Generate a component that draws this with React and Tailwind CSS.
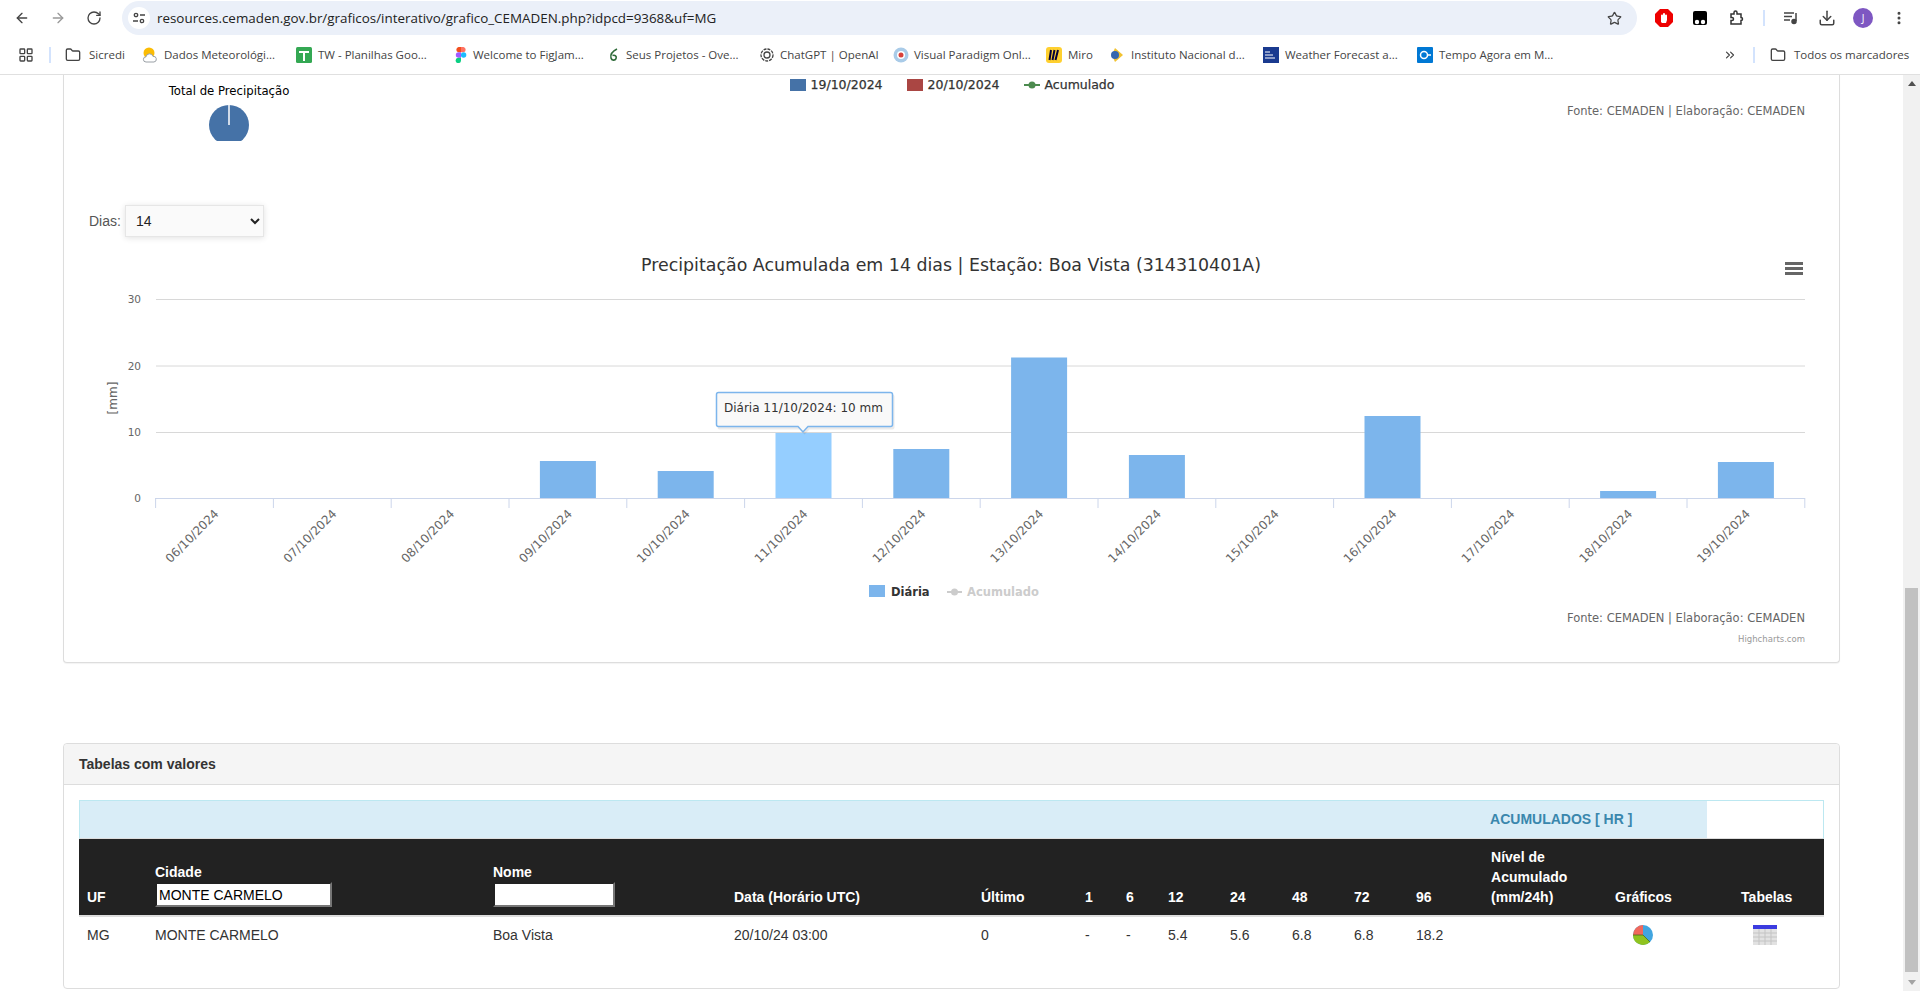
import { ArrowLeft, ArrowRight, RotateCw, Star, Download, MoreVertical, Folder, LayoutGrid, ChevronsRight } from 'lucide-react';

const chartFont = '"DejaVu Sans", sans-serif';

const bookmarks = [
  { w: 'w-[77px]', gap: 'gap-[8px]', label: 'Sicredi', icon: <Folder size={16} strokeWidth={2} className="text-[#444]" /> },
  { w: 'w-[154px]', gap: 'gap-[6px]', label: 'Dados Meteorológi...', icon: <SunIcon /> },
  { w: 'w-[157px]', gap: 'gap-[6px]', label: 'TW - Planilhas Goo...', icon: <SheetIcon /> },
  { w: 'w-[153px]', gap: 'gap-[4px]', label: 'Welcome to FigJam...', icon: <FigmaIcon /> },
  { w: 'w-[153px]', gap: 'gap-[4px]', label: 'Seus Projetos - Ove...', icon: <LeafIcon /> },
  { w: 'w-[134px]', gap: 'gap-[5px]', label: 'ChatGPT | OpenAI', icon: <GptIcon /> },
  { w: 'w-[153px]', gap: 'gap-[5px]', label: 'Visual Paradigm Onl...', icon: <VpIcon /> },
  { w: 'w-[63px]', gap: 'gap-[6px]', label: 'Miro', icon: <MiroIcon /> },
  { w: 'w-[154px]', gap: 'gap-[6px]', label: 'Instituto Nacional d...', icon: <InpeIcon /> },
  { w: 'w-[154px]', gap: 'gap-[6px]', label: 'Weather Forecast a...', icon: <TwcIcon /> },
  { w: 'w-[140px]', gap: 'gap-[6px]', label: 'Tempo Agora em M...', icon: <TempoIcon /> },
];

function SunIcon() {
  return (
    <svg width="16" height="16" viewBox="0 0 16 16">
      <circle cx="7" cy="6" r="5.5" fill="#fbbc04" />
      <path d="M4 15a2.6 2.6 0 0 1 0-5.2 3.6 3.6 0 0 1 7-.4 2.8 2.8 0 0 1 1 5.6z" fill="#fff" stroke="#9aa0a6" strokeWidth="1" />
    </svg>
  );
}
function SheetIcon() {
  return (
    <svg width="16" height="16" viewBox="0 0 16 16">
      <rect width="16" height="16" rx="1.5" fill="#34a853" />
      <path d="M3 5h10M8 5v9" stroke="#fff" strokeWidth="2" />
    </svg>
  );
}
function FigmaIcon() {
  return (
    <svg width="16" height="16" viewBox="0 0 16 16">
      <path d="M8 0H5.5a2.7 2.7 0 0 0 0 5.3H8z" fill="#f24e1e" />
      <path d="M8 0h2.5a2.7 2.7 0 0 1 0 5.3H8z" fill="#ff7262" />
      <path d="M8 5.3H5.5a2.7 2.7 0 0 0 0 5.4H8z" fill="#a259ff" />
      <circle cx="10.6" cy="8" r="2.7" fill="#1abcfe" />
      <path d="M8 10.7H5.5A2.7 2.7 0 1 0 8 13.4z" fill="#0acf83" />
    </svg>
  );
}
function LeafIcon() {
  return (
    <svg width="16" height="16" viewBox="0 0 16 16" fill="none" stroke="#2f6b3a" strokeWidth="1.6">
      <path d="M11 2C7 4 4 7 5 11c.6 2.500 4 3 5 .6 1-2.200-1-4-3.500-3" />
    </svg>
  );
}
function GptIcon() {
  return (
    <svg width="16" height="16" viewBox="0 0 16 16" fill="none" stroke="#444" strokeWidth="1.300">
      <circle cx="8" cy="8" r="6" strokeDasharray="3 1" />
      <circle cx="8" cy="8" r="3" />
    </svg>
  );
}
function VpIcon() {
  return (
    <svg width="16" height="16" viewBox="0 0 16 16">
      <circle cx="8" cy="8" r="7.500" fill="#a9cbe8" />
      <circle cx="8" cy="8" r="4" fill="#fff" />
      <circle cx="8" cy="8" r="2.500" fill="#d9403a" />
    </svg>
  );
}
function MiroIcon() {
  return (
    <svg width="16" height="16" viewBox="0 0 16 16">
      <rect width="16" height="16" rx="3" fill="#ffd02f" />
      <path d="M5 3l-1.500 10M8.500 3L6.500 13M12 3L9.500 13" stroke="#050038" strokeWidth="2" />
    </svg>
  );
}
function InpeIcon() {
  return (
    <svg width="16" height="16" viewBox="0 0 16 16">
      <path d="M6 1l8 7-8 7-3-7z" fill="#f2c230" />
      <circle cx="6" cy="8" r="4" fill="#3566b0" />
    </svg>
  );
}
function TwcIcon() {
  return (
    <svg width="16" height="16" viewBox="0 0 16 16">
      <rect width="16" height="16" fill="#1a3a8f" />
      <path d="M2 5h5M2 8h8M2 11h10" stroke="#fff" strokeWidth="1" />
    </svg>
  );
}
function TempoIcon() {
  return (
    <svg width="16" height="16" viewBox="0 0 16 16">
      <rect width="16" height="16" rx="1" fill="#0078d4" />
      <circle cx="7" cy="8" r="3.500" fill="none" stroke="#fff" strokeWidth="1.500" />
      <path d="M10 8h4" stroke="#fff" strokeWidth="1.500" />
    </svg>
  );
}

function Toolbar() {
  return (
    <div className="h-[36px] shrink-0 flex items-center bg-white text-[#444]">
      <div className="w-[122px] flex items-center pl-[14px] gap-[20px] shrink-0">
        <ArrowLeft size={16} strokeWidth={2} />
        <ArrowRight size={16} strokeWidth={2} className="text-[#999]" />
        <RotateCw size={16} strokeWidth={2} />
      </div>
      <div className="w-[1515px] h-[34px] rounded-full bg-[#ebf0f9] flex items-center pl-[6px] pr-[15px] shrink-0">
        <div className="w-[22px] h-[22px] rounded-full bg-white flex items-center justify-center shrink-0">
          <svg width="14" height="14" viewBox="0 0 14 14" fill="none" stroke="#444" strokeWidth="1.300">
            <circle cx="4" cy="4" r="1.700" />
            <path d="M8 4h5M1 10h5" />
            <circle cx="10" cy="10" r="1.700" />
          </svg>
        </div>
        <span className="ml-[7px] text-[13.4px] text-[#222] font-['Open_Sans',sans-serif]">resources.cemaden.gov.br/graficos/interativo/grafico_CEMADEN.php?idpcd=9368&uf=MG</span>
        <Star size={15} strokeWidth={2} className="ml-auto" />
      </div>
      <div className="flex-1 flex items-center pl-[17px]">
        <svg width="20" height="20" viewBox="0 0 20 20">
          <path d="M6 1h8l5 5v8l-5 5H6l-5-5V6z" fill="#e00" />
          <path d="M7 14V7.500a1 1 0 0 1 2 0V6a1 1 0 0 1 2 0v1.500a1 1 0 0 1 2 0V12l-1 3H8z" fill="#fff" />
        </svg>
        <svg width="16" height="16" viewBox="0 0 16 16" className="ml-[18px]">
          <path d="M3 1h10a2 2 0 0 1 2 2v10a2 2 0 0 1-2 2H3a2 2 0 0 1-2-2V3a2 2 0 0 1 2-2z" fill="#000" />
          <circle cx="5" cy="12" r="2.200" fill="#fff" />
          <circle cx="11" cy="12" r="2.200" fill="#fff" />
        </svg>
        <svg width="16" height="16" viewBox="0 0 16 16" fill="none" stroke="#333" strokeWidth="1.500" className="ml-[21px]">
          <path d="M2 4h3V2.500a1.500 1.500 0 0 1 3 0V4h4v3.500a1.500 1.500 0 0 1 0 3V14H2v-3.500h1a1.500 1.500 0 0 0 0-3H2z" />
        </svg>
        <div className="ml-[18px] w-[2px] h-[16px] bg-[#d3e3fd]" />
        <svg width="16" height="14" viewBox="0 0 16 14" fill="none" stroke="#444" strokeWidth="1.500" className="ml-[18px]">
          <path d="M1 2h10M1 5.500h8M1 9h6M13 2v8" />
          <circle cx="11" cy="10.500" r="2" fill="#444" />
        </svg>
        <Download size={18} strokeWidth={2} className="ml-[19px]" />
        <div className="ml-[17px] w-[20px] h-[20px] rounded-full bg-[#7e57c2] text-white text-[10px] flex items-center justify-center font-['Open_Sans',sans-serif]">J</div>
        <MoreVertical size={16} strokeWidth={2.500} className="ml-[18px]" />
      </div>
    </div>
  );
}

function Bookmarks() {
  return (
    <div className="h-[39px] shrink-0 flex items-center bg-white border-b border-[#e0e0e0] text-[11.5px] text-[#444] font-['Open_Sans',sans-serif]">
      <div className="w-[49px] flex justify-end pr-[15px]">
        <LayoutGrid size={16} strokeWidth={2} />
      </div>
      <div className="w-[2px] h-[16px] bg-[#d3e3fd]" />
      <div className="flex items-center pl-[14px]">
        {bookmarks.map((b) => (
          <div key={b.label} className={`${b.w} ${b.gap} flex items-center shrink-0 whitespace-nowrap`}>
            <span className="shrink-0 flex">{b.icon}</span>
            <span>{b.label}</span>
          </div>
        ))}
      </div>
      <ChevronsRight size={14} className="ml-[166px]" />
      <div className="ml-[16px] w-[2px] h-[16px] bg-[#d3e3fd]" />
      <Folder size={16} strokeWidth={2} className="ml-[15px]" />
      <span className="ml-[8px]">Todos os marcadores</span>
    </div>
  );
}

function Scrollbar() {
  return (
    <div className="w-[17px] shrink-0 bg-[#f1f1f1] flex flex-col items-center">
      <div className="h-[17px] flex items-center justify-center">
        <div className="w-0 h-0 border-x-[4px] border-x-transparent border-b-[5px] border-b-[#505050]" />
      </div>
      <div className="mt-[496px] w-[13px] h-[384px] bg-[#c1c1c1]" />
      <div className="mt-auto h-[17px] flex items-center justify-center">
        <div className="w-0 h-0 border-x-[4px] border-x-transparent border-t-[5px] border-t-[#a3a3a3]" />
      </div>
    </div>
  );
}

const step = 117.8;
const ticks = Array.from({ length: 15 }, (_, i) => 155.6 + step * i);
const days = ['06', '07', '08', '09', '10', '11', '12', '13', '14', '15', '16', '17', '18', '19'];
const bars = { 3: 461, 4: 471, 5: 433, 6: 449, 7: 357.5, 8: 455, 10: 416, 12: 491, 13: 462 };

function Chart() {
  return (
    <svg width="1775" height="415" viewBox="64 245 1775 415" className="block" style={{ fontFamily: chartFont }}>
      <text x="951" y="271" textAnchor="middle" fontSize="17.4" fill="#333">Precipitação Acumulada em 14 dias | Estação: Boa Vista (314310401A)</text>
      <path d="M1785 263.500h18M1785 268.500h18M1785 273.500h18" stroke="#666" strokeWidth="3" />
      {[299.5, 366, 432.5].map((y) => (
        <line key={y} x1="156" x2="1805" y1={y} y2={y} stroke="#d8d8d8" strokeWidth="1" />
      ))}
      {[[30, 303], [20, 370], [10, 436], [0, 502]].map(([v, y]) => (
        <text key={v} x="141" y={y} textAnchor="end" fontSize="10.500" fill="#666">{v}</text>
      ))}
      <text transform="translate(117 398) rotate(-90)" textAnchor="middle" fontSize="12" fill="#666">[mm]</text>
      {Object.entries(bars).map(([i, top]) => (
        <rect
          key={i}
          x={155.6 + step * (Number(i) + 0.5) - 28}
          y={top}
          width="56"
          height={498 - top}
          fill={i === '5' ? '#95ceff' : '#7cb5ec'}
        />
      ))}
      <line x1="155" x2="1805" y1="498.500" y2="498.500" stroke="#ccd6eb" />
      {ticks.map((x) => (
        <line key={x} x1={x} x2={x} y1="498" y2="508" stroke="#ccd6eb" />
      ))}
      {days.map((d, i) => (
        <text
          key={d}
          transform={`translate(${155.6 + step * (i + 0.5) + 5} 514.5) rotate(-45)`}
          textAnchor="end"
          fontSize="12"
          fill="#666"
        >
          {d}/10/2024
        </text>
      ))}
      <path d="M718.500 393.500h173a2 2 0 0 1 2 2v31a2 2 0 0 1-2 2h-83l-5 5-5-5h-80a2 2 0 0 1-2-2v-31a2 2 0 0 1 2-2z" fill="#000" fillOpacity="0.08" transform="translate(1 1)" />
      <path d="M718.500 392.500h172a2 2 0 0 1 2 2v30a2 2 0 0 1-2 2h-82.500l-5 5.500-5-5.500h-79.500a2 2 0 0 1-2-2v-30a2 2 0 0 1 2-2z" fill="#f9f9f9" stroke="#7cb5ec" strokeWidth="1.500" />
      <text x="724" y="412" fontSize="12" fill="#333">Diária 11/10/2024: 10 mm</text>
      <rect x="869" y="585" width="16" height="12" fill="#7cb5ec" />
      <text x="891" y="596" fontSize="11.500" fontWeight="700" fill="#333">Diária</text>
      <line x1="947" x2="962" y1="592" y2="592" stroke="#ccc" strokeWidth="2" />
      <circle cx="954.500" cy="592" r="3.500" fill="#ccc" />
      <text x="967" y="596" fontSize="11.500" fontWeight="700" fill="#ccc">Acumulado</text>
      <text x="1805" y="622" textAnchor="end" fontSize="11.500" fill="#666">Fonte: CEMADEN | Elaboração: CEMADEN</text>
      <text x="1805" y="642" textAnchor="end" fontSize="8.500" fill="#999">Highcharts.com</text>
    </svg>
  );
}

function ChartCard() {
  return (
    <div className="h-[588px] border-x border-b border-[#ddd] rounded-b-[4px] bg-white shadow-[0_1px_1px_rgba(0,0,0,0.05)]">
      <div className="h-[130px] grid grid-cols-[1fr_auto_1fr] font-['DejaVu_Sans',sans-serif]">
        <div className="pl-[100px] pt-[8px]">
          <div className="w-[130px] text-center text-[11.7px] text-black whitespace-nowrap flex flex-col items-center">
            <span>Total de Precipitação</span>
            <svg width="40" height="36" viewBox="0 0 40 36" className="mt-[4px]">
              <circle cx="20" cy="20" r="20" fill="#4572a7" />
              <line x1="20" x2="20" y1="0" y2="20" stroke="#fff" strokeWidth="1.500" />
            </svg>
          </div>
        </div>
        <div className="pt-[4px] pl-[1px] flex items-start text-[12.5px] text-[#333] [-webkit-text-stroke:0.25px_#333]">
          <div className="flex items-center h-[12px]">
            <span className="w-[16px] h-[12px] bg-[#4572a7]" />
            <span className="ml-[5px] w-[96px]">19/10/2024</span>
            <span className="w-[16px] h-[12px] bg-[#aa4643]" />
            <span className="ml-[5px] w-[96px]">20/10/2024</span>
            <svg width="16" height="12" viewBox="0 0 16 12">
              <line x1="0" x2="16" y1="6" y2="6" stroke="#4d8b4f" strokeWidth="2" />
              <circle cx="8" cy="6" r="3.500" fill="#4d8b4f" />
            </svg>
            <span className="ml-[5px]">Acumulado</span>
          </div>
        </div>
        <div className="pt-[28px] pr-[34px] text-right text-[11.500px] text-[#666] whitespace-nowrap">
          Fonte: CEMADEN | Elaboração: CEMADEN
        </div>
      </div>
      <div className="h-[40px] flex items-start pl-[25px] font-['Liberation_Sans',sans-serif] text-[14px] text-[#555]">
        <span className="mt-[6px] mr-[4px]">Dias:</span>
        <select defaultValue="14" className="w-[139px] h-[32px] pl-[6px] border border-[#e6e6e6] bg-[#fafafa] text-[14px] text-[#222] shadow-[0_1px_6px_rgba(0,0,0,0.12)]">
          <option value="7">7</option>
          <option value="14">14</option>
          <option value="30">30</option>
        </select>
      </div>
      <Chart />
    </div>
  );
}

const headCell = 'px-2 pb-[8px] align-bottom text-left font-bold text-white border-b-2 border-[#ddd]';
const cols = ['w-[68px]', 'w-[338px]', 'w-[241px]', 'w-[247px]', 'w-[104px]', 'w-[41px]', 'w-[42px]', 'w-[62px]', 'w-[62px]', 'w-[62px]', 'w-[62px]', 'w-[75px]', 'w-[124px]', 'w-[100px]', 'w-[117px]'];

function PieIcon() {
  return (
    <svg width="20" height="20" viewBox="0 0 20 20" className="block">
      <circle cx="10" cy="10" r="10" fill="#41a5e0" />
      <path d="M10 10V0A10 10 0 0 0 0 10z" fill="#f0685c" />
      <path d="M0 10h10l7 7A10 10 0 0 1 0 10z" fill="#8fc31f" />
      <path d="M0 10h10l7 7" fill="none" stroke="#4a6b20" strokeWidth="0.800" />
    </svg>
  );
}

function TableIcon() {
  return (
    <svg width="24" height="20" viewBox="0 0 24 20" className="block">
      <rect width="24" height="20" fill="#e2e2e2" />
      <rect width="24" height="4" fill="#3b3be0" />
      <path d="M6 4v16M12 4v16M18 4v16M0 8h24M0 12h24M0 16h24" stroke="#c4c4c4" strokeWidth="1" />
    </svg>
  );
}

function ValuesPanel() {
  const heads = ['Último', '1', '6', '12', '24', '48', '72', '96'];
  const vals = ['0', '-', '-', '5.4', '5.6', '6.8', '6.8', '18.2'];
  return (
    <div className="mt-[80px] h-[246px] border border-[#ddd] rounded-[4px] bg-white font-['Liberation_Sans',sans-serif] text-[14px] text-[#333]">
      <div className="h-[41px] px-[15px] flex items-center bg-[#f5f5f5] border-b border-[#ddd] rounded-t-[4px] font-bold text-[14px]">
        Tabelas com valores
      </div>
      <div className="pl-[15px] pt-[15px]">
        <table className="w-[1745px] table-fixed border-separate border-spacing-0">
          <colgroup>
            {cols.map((c, i) => <col key={i} className={c} />)}
          </colgroup>
          <thead>
            <tr className="h-[39px]">
              <td colSpan={12} className="bg-[#d9edf7] border-t border-l border-t-[#bce8f1] border-l-[#bce8f1] border-b border-b-[#ddd]" />
              <td colSpan={2} className="bg-[#d9edf7] border-t border-t-[#bce8f1] border-b border-b-[#ddd] pl-[7px] font-bold text-[14px] text-[#3a87ad]">ACUMULADOS [ HR ]</td>
              <td className="border-t border-r border-t-[#bce8f1] border-r-[#bce8f1] border-b border-b-[#ddd]" />
            </tr>
            <tr className="h-[78px] bg-[#222] leading-[20px]">
              <th className={headCell}>UF</th>
              <th className={headCell}>
                <div>Cidade</div>
                <input defaultValue="MONTE CARMELO" className="block w-[177px] h-[25px] pl-[2px] bg-white text-black font-normal text-[14px] border-2 border-[#767676] [border-style:inset]" />
              </th>
              <th className={headCell}>
                <div>Nome</div>
                <input className="block w-[122px] h-[25px] bg-white border-2 border-[#767676] [border-style:inset]" />
              </th>
              <th className={headCell}>Data (Horário UTC)</th>
              {heads.map((h) => <th key={h} className={headCell}>{h}</th>)}
              <th className={headCell}>Nível de Acumulado (mm/24h)</th>
              <th className={headCell}>Gráficos</th>
              <th className={`${headCell} !pl-[34px]`}>Tabelas</th>
            </tr>
          </thead>
          <tbody>
            <tr className="h-[36px]">
              <td className="px-2">MG</td>
              <td className="px-2">MONTE CARMELO</td>
              <td className="px-2">Boa Vista</td>
              <td className="px-2">20/10/24 03:00</td>
              {vals.map((v, i) => <td key={i} className="px-2">{v}</td>)}
              <td />
              <td className="pl-[26px]"><PieIcon /></td>
              <td className="pl-[46px]"><TableIcon /></td>
            </tr>
          </tbody>
        </table>
      </div>
    </div>
  );
}

export default function App() {
  return (
    <div className="w-[1920px] h-[991px] flex flex-col overflow-hidden bg-white">
      <Toolbar />
      <Bookmarks />
      <div className="flex-1 flex min-h-0">
        <div className="flex-1 pl-[63px] pr-[63px]">
          <ChartCard />
          <ValuesPanel />
        </div>
        <Scrollbar />
      </div>
    </div>
  );
}
